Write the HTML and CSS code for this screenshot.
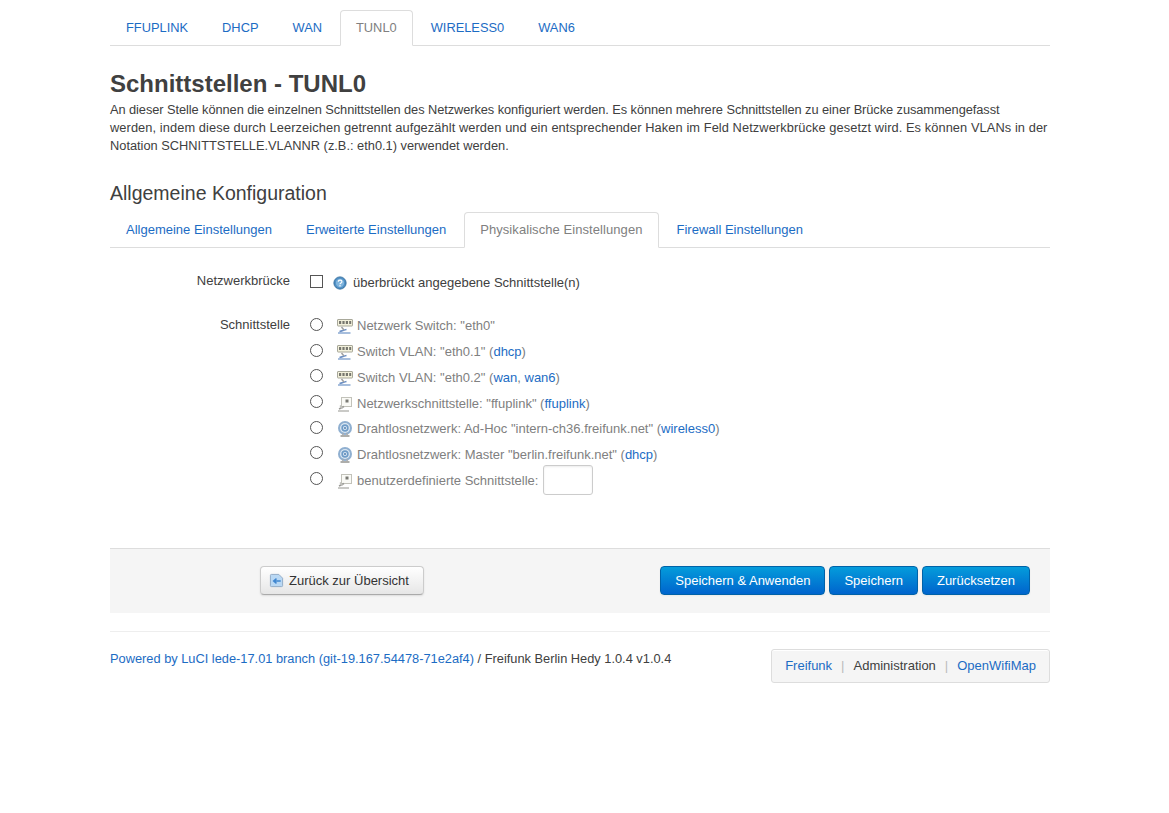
FILE: index.html
```html
<!DOCTYPE html>
<html lang="de">
<head>
<meta charset="utf-8">
<title>Schnittstellen - TUNL0</title>
<link rel="stylesheet" href="styles.css">
</head>
<body>
<div class="container">
  <ul class="tabs top-tabs">
    <li><a href="#">FFUPLINK</a></li>
    <li><a href="#">DHCP</a></li>
    <li><a href="#">WAN</a></li>
    <li class="active"><a href="#">TUNL0</a></li>
    <li><a href="#">WIRELESS0</a></li>
    <li><a href="#">WAN6</a></li>
  </ul>
  <h2 class="page-title">Schnittstellen - TUNL0</h2>
  <p class="desc"><span class="line line-narrow">An dieser Stelle können die einzelnen Schnittstellen des Netzwerkes konfiguriert werden. Es können mehrere Schnittstellen zu einer Brücke zusammengefasst</span> <span class="line line-wide">werden, indem diese durch Leerzeichen getrennt aufgezählt werden und ein entsprechender Haken im Feld Netzwerkbrücke gesetzt wird. Es können VLANs in der</span> <span class="line">Notation SCHNITTSTELLE.VLANNR (z.B.: eth0.1) verwendet werden.</span></p>
  <h3 class="section-title">Allgemeine Konfiguration</h3>
  <ul class="tabs sub-tabs">
    <li><a href="#">Allgemeine Einstellungen</a></li>
    <li><a href="#">Erweiterte Einstellungen</a></li>
    <li class="active"><a href="#">Physikalische Einstellungen</a></li>
    <li><a href="#">Firewall Einstellungen</a></li>
  </ul>

  <div class="form-row bridge-row">
    <div class="form-label">Netzwerkbrücke</div>
    <div class="form-field bridge-field">
      <span class="checkbox"></span>
      <svg class="icon help" viewBox="0 0 16 16"><circle cx="8" cy="8" r="7" fill="#4f8fc4" stroke="#2f6a9c" stroke-width="1"/><circle cx="8" cy="8" r="4.8" fill="#7fb4dd"/><path d="M6 6.5c0-2.4 4.2-2.4 4.2 0 0 1.6-2.2 1.5-2.2 3" fill="none" stroke="#fff" stroke-width="1.3"/><rect x="7.3" y="10.4" width="1.4" height="1.5" fill="#fff"/></svg>
      <span class="help-text">überbrückt angegebene Schnittstelle(n)</span>
    </div>
  </div>

  <div class="form-row iface-row">
    <div class="form-label">Schnittstelle</div>
    <ul class="iface-list">
      <li><span class="radio"></span><svg class="icon" viewBox="0 0 16 16"><use href="#sw"/></svg><span class="iface">Netzwerk Switch: "eth0"</span></li>
      <li><span class="radio"></span><svg class="icon" viewBox="0 0 16 16"><use href="#sw"/></svg><span class="iface">Switch VLAN: "eth0.1" (<a href="#">dhcp</a>)</span></li>
      <li><span class="radio"></span><svg class="icon" viewBox="0 0 16 16"><use href="#sw"/></svg><span class="iface">Switch VLAN: "eth0.2" (<a href="#">wan</a>, <a href="#">wan6</a>)</span></li>
      <li><span class="radio"></span><svg class="icon" viewBox="0 0 16 16"><use href="#eth"/></svg><span class="iface">Netzwerkschnittstelle: "ffuplink" (<a href="#">ffuplink</a>)</span></li>
      <li><span class="radio"></span><svg class="icon" viewBox="0 0 16 16"><use href="#wifi"/></svg><span class="iface">Drahtlosnetzwerk: Ad-Hoc "intern-ch36.freifunk.net" (<a href="#">wireless0</a>)</span></li>
      <li><span class="radio"></span><svg class="icon" viewBox="0 0 16 16"><use href="#wifi"/></svg><span class="iface">Drahtlosnetzwerk: Master "berlin.freifunk.net" (<a href="#">dhcp</a>)</span></li>
      <li><span class="radio"></span><svg class="icon" viewBox="0 0 16 16"><use href="#eth"/></svg><span class="iface">benutzerdefinierte Schnittstelle:</span><span class="text-input"></span></li>
    </ul>
  </div>

  <div class="actions">
    <a class="btn back-btn" href="#"><svg class="back-icon" viewBox="0 0 16 16"><path d="M1.5 2.5a1 1 0 0 1 1-1h8l4 4v8a1 1 0 0 1-1 1h-11a1 1 0 0 1-1-1z" fill="#b9d8f4" stroke="#8fa9c4"/><path d="M12.5 8.5H5M8 6L5 8.5 8 11" fill="none" stroke="#3f86d0" stroke-width="1.6"/></svg>Zurück zur Übersicht</a>
    <div class="primary-group">
      <a class="btn primary" href="#">Speichern &amp; Anwenden</a>
      <a class="btn primary" href="#">Speichern</a>
      <a class="btn primary" href="#">Zurücksetzen</a>
    </div>
  </div>

  <footer class="page-footer">
    <p class="credits"><a href="#">Powered by LuCI lede-17.01 branch (git-19.167.54478-71e2af4)</a> / Freifunk Berlin Hedy 1.0.4 v1.0.4</p>
    <ul class="pills">
      <li><a href="#">Freifunk</a></li>
      <li class="sep">|</li>
      <li class="current">Administration</li>
      <li class="sep">|</li>
      <li><a href="#">OpenWifiMap</a></li>
    </ul>
  </footer>
</div>

<svg class="defs" width="0" height="0">
  <defs>
    <g id="sw">
      <rect x="0.5" y="1.5" width="15" height="6.5" rx="0.5" fill="#f3f1dc" stroke="#a8a89a"/>
      <path d="M2 3h2.2v3H2zM5.4 3h2.2v3H5.4zM8.8 3H11v3H8.8zM12.2 3h2v3h-2z" fill="#77776f"/>
      <path d="M1 15h12.5" stroke="#8aa9d2" stroke-width="1.5" fill="none"/>
      <path d="M2.5 13.5C5 13 7 12 9.5 11.5" stroke="#6b8fc4" stroke-width="1.5" fill="none"/>
      <path d="M4.5 9l2.5 3" stroke="#a0a0a0" stroke-width="1.5"/>
    </g>
    <g id="eth">
      <rect x="4.5" y="1.5" width="10" height="9" fill="#fafaf6" stroke="#c2c2ba"/>
      <rect x="8.5" y="3.5" width="3" height="3" fill="#7a7a74"/>
      <path d="M1 15h11" stroke="#b9b9b4" stroke-width="1.5" fill="none"/>
      <path d="M2 13l5-2.5" stroke="#9a9a96" stroke-width="1.5" fill="none"/>
      <path d="M3 9.5l2.5 3" stroke="#c0c0bc" stroke-width="1.5"/>
    </g>
    <g id="wifi">
      <circle cx="8" cy="7" r="7" fill="#8fafd0"/>
      <circle cx="8" cy="7" r="5" fill="#dbe7f2"/>
      <circle cx="8" cy="7" r="3.7" fill="#6f9cc8"/>
      <circle cx="8" cy="7" r="2" fill="#dbe7f2"/>
      <circle cx="8" cy="7" r="1" fill="#4f7fb0"/>
      <path d="M3.5 15h9" stroke="#9a9a96" stroke-width="1.6"/>
      <path d="M6.5 12l-1 2.5M9.5 12l1 2.5" stroke="#aaa" stroke-width="1.2"/>
    </g>
  </defs>
</svg>
</body>
</html>
```
FILE: styles.css
```css
* { box-sizing: border-box; }
html, body { margin: 0; padding: 0; background: #fff; }
body {
  font-family: "Liberation Sans", Arial, sans-serif;
  font-size: 13px;
  line-height: 18px;
  color: #404040;
}
a { color: #1c6cc4; text-decoration: none; }
.container { width: 940px; margin-left: 110px; padding-top: 10px; }
.defs { position: absolute; }

.tabs { list-style: none; margin: 0; padding: 0; display: flex; gap: 2px; border-bottom: 1px solid #ddd; }
.tabs li { margin-bottom: -1px; border: 1px solid transparent; border-radius: 4px 4px 0 0; }
.tabs li a { display: block; padding: 0 15px; line-height: 34px; font-size: 13px; }
.tabs .active { background: #fff; border-color: #ddd #ddd #fff; }
.tabs .active a { color: #808080; }
.top-tabs li a { font-size: 12.85px; }
.sub-tabs .active a { letter-spacing: 0.07px; }

.page-title { margin: 23px 0 0; font-size: 24px; line-height: 30px; font-weight: bold; color: #404040; }
.desc { margin: 2px 0 0; font-size: 12.82px; line-height: 18px; }
.line { display: block; white-space: nowrap; }
.line-narrow { letter-spacing: -0.07px; }
.line-wide { letter-spacing: 0.085px; }
.section-title { margin: 25px 0 0; font-size: 19.5px; line-height: 26px; font-weight: normal; color: #404040; }
.sub-tabs { margin-top: 6px; }

.form-row { display: flex; }
.form-label { width: 180px; text-align: right; font-size: 13px; color: #404040; }
.bridge-row { margin-top: 24px; }
.bridge-field { display: flex; align-items: center; margin-left: 20px; height: 20px; }
.checkbox { width: 13px; height: 13px; border: 1px solid #555; background: #fff; margin-top: -2px; }
.icon { width: 16px; height: 16px; display: block; flex: none; }
.icon.help { width: 14px; height: 14px; margin-left: 10px; margin-top: 2px; }
.help-text { margin-left: 6px; font-size: 13px; margin-top: 2px; }

.iface-row { margin-top: 24px; }
.iface-list { list-style: none; margin: -4.4px 0 0 20px; padding: 0; }
.iface-list li { display: flex; align-items: center; height: 25.7px; }
.radio { width: 13px; height: 13px; border: 1px solid #555; border-radius: 50%; background: #fff; flex: none; }
.iface-list .icon { margin-left: 14px; margin-top: 4px; }
.iface { margin-left: 4px; font-size: 13px; color: #808080; margin-top: 4px; }
.text-input { width: 50px; height: 30px; border: 1px solid #ccc; border-radius: 3px; margin-left: 5px; margin-top: 3px; box-shadow: inset 0 1px 2px rgba(0,0,0,0.08); }

.actions {
  margin-top: 56.4px;
  height: 65px;
  background: #f5f5f5;
  border-top: 1px solid #ddd;
  display: flex;
  align-items: center;
  justify-content: space-between;
  padding: 0 20px 0 150px;
}
.btn { display: flex; align-items: center; height: 29px; border-radius: 4px; font-size: 13px; }
.back-btn {
  width: 164px;
  padding-left: 8px;
  color: #333;
  border: 1px solid #ccc;
  border-bottom-color: #aaa;
  background: linear-gradient(#fff, #e6e6e6);
  box-shadow: 0 1px 2px rgba(0,0,0,0.1);
}
.back-icon { width: 15px; height: 15px; margin-right: 5px; }
.primary-group { display: flex; gap: 4px; }
.primary {
  padding: 0 14px;
  color: #fff;
  border: 1px solid #0062a8;
  background: linear-gradient(#049cdb, #0064cd);
  box-shadow: 0 1px 2px rgba(0,0,0,0.05);
}

.page-footer {
  margin-top: 18px;
  border-top: 1px solid #eee;
  display: flex;
  justify-content: space-between;
  align-items: flex-start;
  padding-top: 17px;
}
.credits { margin: 1px 0 0; font-size: 12.82px; }
.pills {
  list-style: none;
  margin: 0;
  padding: 0 13px 0 13px;
  height: 34px;
  display: flex;
  align-items: center;
  gap: 9px;
  font-size: 13px;
  background: #f5f5f5;
  border: 1px solid #ddd;
  border-radius: 3px;
  box-shadow: inset 0 1px 0 #fff;
}
.pills .sep { color: #bbb; }
```
